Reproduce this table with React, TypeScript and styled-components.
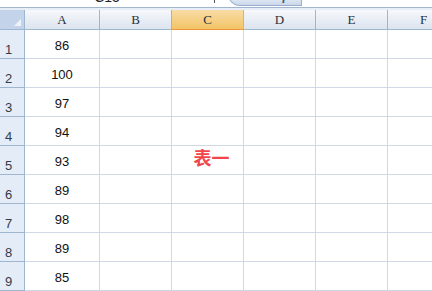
import { Fragment } from "react";
import styled, { createGlobalStyle } from "styled-components";

const Global = createGlobalStyle`
    html, body {
        margin: 0;
        padding: 0;
        background: #ffffff;
        overflow: hidden;
    }
`

const Sheet = styled.div`
    width: 432px;
    height: 291px;
    overflow: hidden;
    display: flex;
    flex-direction: column;
    font-family: "Liberation Sans", Arial, sans-serif;
`

const FormulaBar = styled.div`
    height: 7px;
    flex: none;
    display: flex;
    align-items: flex-end;
    overflow: hidden;
    background: #ffffff;
    border-bottom: 1px solid #a3b5cd;
`

const NameBox = styled.div`
    width: 214px;
    text-align: center;
    font-size: 14px;
    line-height: 14px;
    margin-bottom: 3px;
    color: #222;
`

const DropTick = styled.div`
    width: 1px;
    height: 3px;
    margin: 0 13px 4px 0;
    background: #555;
`

const FxTab = styled.div`
    width: 74px;
    height: 12px;
    margin-bottom: 1px;
    border: 1px solid #98aecb;
    border-radius: 0 0 0 12px;
    background: linear-gradient(#eef3fa, #c9d7ea);
    display: flex;
    align-items: flex-end;
    justify-content: flex-end;
    padding-right: 8px;
    box-sizing: border-box;
`

const FxText = styled.span`
    font-family: "Liberation Serif", serif;
    font-style: italic;
    font-weight: bold;
    font-size: 13px;
    line-height: 13px;
    margin-bottom: 3px;
    color: #4a5a70;
`

const Spacer = styled.div`
    height: 2px;
    flex: none;
    background: #e8eef7;
`

const Grid = styled.div`
    display: grid;
    grid-template-columns: 25px 75px 72px 72px 72px 72px 72px;
    grid-template-rows: 20px;
    grid-auto-rows: 29px;
`

const Corner = styled.div`
    background: #c3d3ea;
    border-right: 1px solid #9eb6ce;
    border-bottom: 1px solid #9eb6ce;
    position: relative;
    &::after {
        content: "";
        position: absolute;
        right: 3px;
        bottom: 3px;
        width: 0;
        height: 0;
        border-left: 7px solid transparent;
        border-bottom: 7px solid #eef3fa;
    }
`

const ColHeader = styled.div<{ $active?: boolean }>`
    display: flex;
    align-items: center;
    justify-content: center;
    font-family: "Liberation Serif", "DejaVu Serif", serif;
    font-size: 13px;
    color: #27313d;
    background: ${({ $active }) =>
        $active ? "linear-gradient(#f9dca6, #f2c466)" : "linear-gradient(#f6f8fb, #dce4ef)"};
    border-right: 1px solid ${({ $active }) => ($active ? "#f2b04d" : "#9eb6ce")};
    border-bottom: 1px solid ${({ $active }) => ($active ? "#f29536" : "#9eb6ce")};
`

const RowHeader = styled.div`
    display: flex;
    align-items: flex-end;
    padding: 0 0 1px 5px;
    font-size: 13px;
    color: #333b45;
    background: #e4ecf7;
    border-right: 1px solid #9eb6ce;
    border-bottom: 1px solid #9eb6ce;
`

const Cell = styled.div`
    display: flex;
    align-items: center;
    justify-content: center;
    font-size: 13px;
    color: #111;
    border-right: 1px solid #d0d7e5;
    border-bottom: 1px solid #d0d7e5;
    padding-top: 3px;
`

const Label = styled.span`
    font-family: "Noto Sans CJK SC", sans-serif;
    font-size: 18px;
    font-weight: bold;
    color: #f2464a;
    margin: 0 0 9px 8px;
`

const columns = ["A", "B", "C", "D", "E", "F"];
const scores = [86, 100, 97, 94, 93, 89, 98, 89, 85];

export default function App() {
    return (
        <Sheet>
            <Global />
            <FormulaBar>
                <NameBox>C15</NameBox>
                <DropTick />
                <FxTab>
                    <FxText>fx</FxText>
                </FxTab>
            </FormulaBar>
            <Spacer />
            <Grid>
                <Corner />
                {columns.map((c) => (
                    <ColHeader key={c} $active={c === "C"}>{c}</ColHeader>
                ))}
                {scores.map((score, r) => (
                    <Fragment key={`${r}_row`}>
                        <RowHeader>{r + 1}</RowHeader>
                        {columns.map((c) => (
                            <Cell key={`${r}_${c}`}>
                                {c === "A" && score}
                                {c === "C" && r === 4 && <Label>表一</Label>}
                            </Cell>
                        ))}
                    </Fragment>
                ))}
            </Grid>
        </Sheet>
    )
}
